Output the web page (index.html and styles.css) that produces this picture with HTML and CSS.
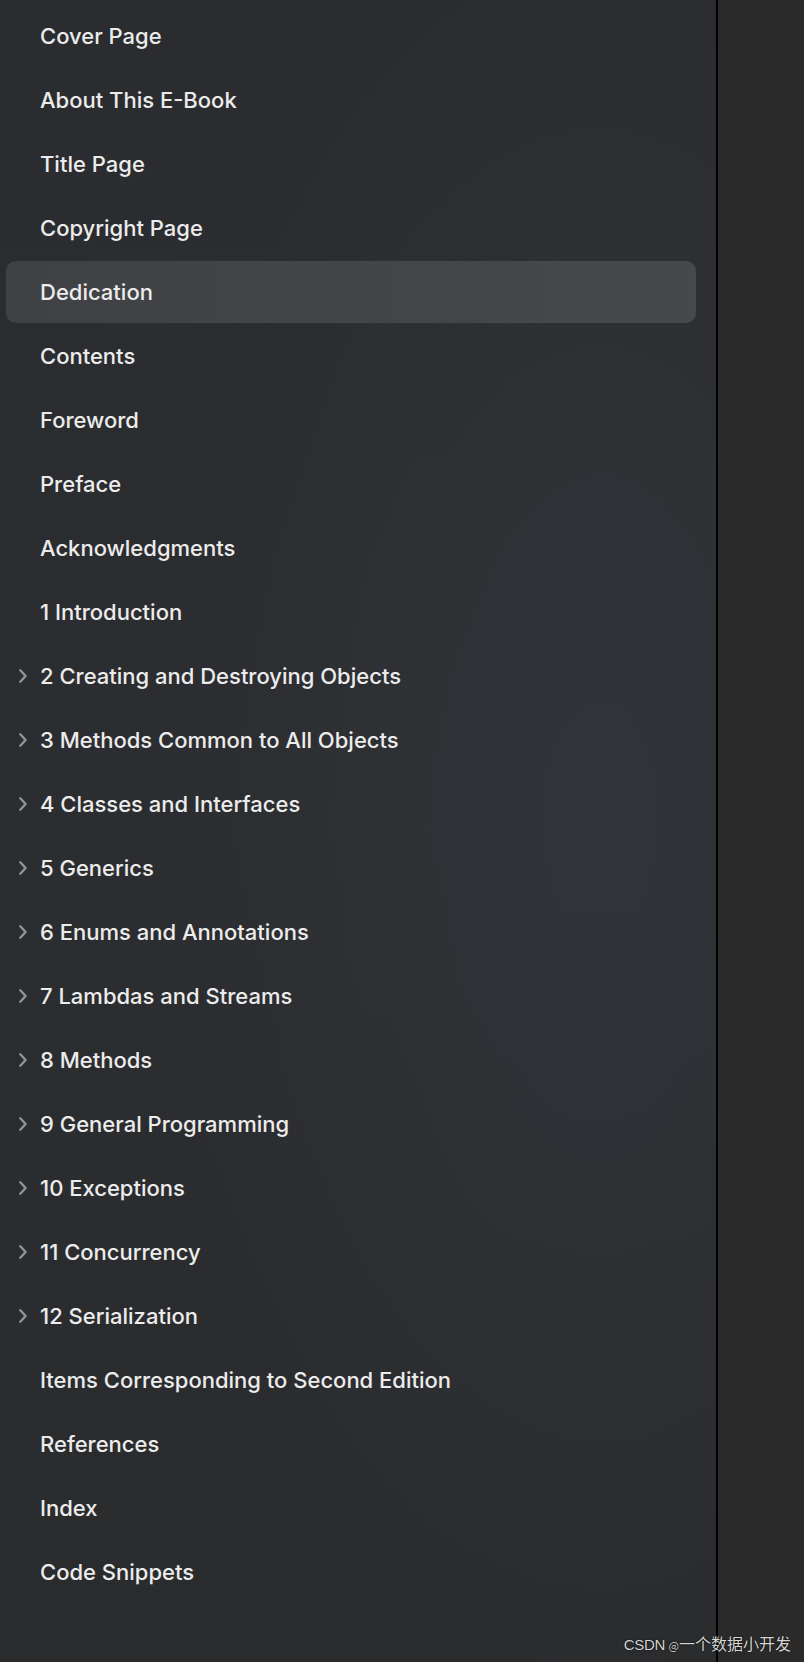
FILE: index.html
```html
<!DOCTYPE html>
<html lang="en">
<head>
<meta charset="utf-8">
<title>Contents</title>
<link rel="stylesheet" href="styles.css">
</head>
<body>
<div class="app">
  <nav class="sidebar">
    <ul class="toc">
      <li class="row"><span class="label">Cover Page</span></li>
      <li class="row"><span class="label">About This E-Book</span></li>
      <li class="row"><span class="label">Title Page</span></li>
      <li class="row"><span class="label">Copyright Page</span></li>
      <li class="row selected"><span class="label">Dedication</span></li>
      <li class="row"><span class="label">Contents</span></li>
      <li class="row"><span class="label">Foreword</span></li>
      <li class="row"><span class="label">Preface</span></li>
      <li class="row"><span class="label">Acknowledgments</span></li>
      <li class="row"><span class="label">1 Introduction</span></li>
      <li class="row has-children"><svg class="chev" viewBox="0 0 8 14"><path d="M1.3 1.3 L6.6 7 L1.3 12.7"/></svg><span class="label">2 Creating and Destroying Objects</span></li>
      <li class="row has-children"><svg class="chev" viewBox="0 0 8 14"><path d="M1.3 1.3 L6.6 7 L1.3 12.7"/></svg><span class="label">3 Methods Common to All Objects</span></li>
      <li class="row has-children"><svg class="chev" viewBox="0 0 8 14"><path d="M1.3 1.3 L6.6 7 L1.3 12.7"/></svg><span class="label">4 Classes and Interfaces</span></li>
      <li class="row has-children"><svg class="chev" viewBox="0 0 8 14"><path d="M1.3 1.3 L6.6 7 L1.3 12.7"/></svg><span class="label">5 Generics</span></li>
      <li class="row has-children"><svg class="chev" viewBox="0 0 8 14"><path d="M1.3 1.3 L6.6 7 L1.3 12.7"/></svg><span class="label">6 Enums and Annotations</span></li>
      <li class="row has-children"><svg class="chev" viewBox="0 0 8 14"><path d="M1.3 1.3 L6.6 7 L1.3 12.7"/></svg><span class="label">7 Lambdas and Streams</span></li>
      <li class="row has-children"><svg class="chev" viewBox="0 0 8 14"><path d="M1.3 1.3 L6.6 7 L1.3 12.7"/></svg><span class="label">8 Methods</span></li>
      <li class="row has-children"><svg class="chev" viewBox="0 0 8 14"><path d="M1.3 1.3 L6.6 7 L1.3 12.7"/></svg><span class="label">9 General Programming</span></li>
      <li class="row has-children"><svg class="chev" viewBox="0 0 8 14"><path d="M1.3 1.3 L6.6 7 L1.3 12.7"/></svg><span class="label">10 Exceptions</span></li>
      <li class="row has-children"><svg class="chev" viewBox="0 0 8 14"><path d="M1.3 1.3 L6.6 7 L1.3 12.7"/></svg><span class="label">11 Concurrency</span></li>
      <li class="row has-children"><svg class="chev" viewBox="0 0 8 14"><path d="M1.3 1.3 L6.6 7 L1.3 12.7"/></svg><span class="label">12 Serialization</span></li>
      <li class="row"><span class="label">Items Corresponding to Second Edition</span></li>
      <li class="row"><span class="label">References</span></li>
      <li class="row"><span class="label">Index</span></li>
      <li class="row"><span class="label">Code Snippets</span></li>
    </ul>
  </nav>
  <div class="divider"></div>
  <main class="content"></main>
</div>
<div class="watermark"><span class="wm-latin">CSDN</span> <span class="wm-at">@</span>一个数据小开发</div>
</body>
</html>
```
FILE: styles.css
```css
html, body {
  margin: 0;
  padding: 0;
  height: 100%;
}
body {
  background: #2a2a2a;
  font-family: Inter, "Noto Sans", "Liberation Sans", sans-serif;
  overflow: hidden;
}
.app {
  display: flex;
  height: 1662px;
}
.sidebar {
  width: 716px;
  flex: none;
  background:
    radial-gradient(ellipse 420px 900px at 600px 820px, rgba(52, 58, 64, 0.55), rgba(52, 58, 64, 0) 100%),
    linear-gradient(180deg, #2b2c2f 0%, #2c2d30 50%, #2a2b2d 100%);
}
.toc {
  list-style: none;
  margin: 0;
  padding: 5px 20px 0 6px;
  display: flex;
  flex-direction: column;
  gap: 2px;
}
.row {
  position: relative;
  height: 62px;
  display: flex;
  align-items: center;
  padding-left: 34px;
  border-radius: 10px;
  color: #ececec;
  font-size: 22px;
  font-weight: 500;
}
.row.selected {
  background: linear-gradient(90deg, #404144 0%, #444548 60%, #46484b 100%);
}
.chev {
  position: absolute;
  left: 13px;
  top: 24px;
  width: 8px;
  height: 14px;
  fill: none;
  stroke: #929396;
  stroke-width: 2.4;
  stroke-linecap: round;
  stroke-linejoin: round;
}
.divider {
  width: 2px;
  flex: none;
  background: #000;
}
.content {
  flex: 1;
  background: #2a2a2a;
}
.watermark {
  position: absolute;
  right: 13px;
  bottom: 7px;
  font-family: "Noto Sans CJK SC", "Noto Sans", sans-serif;
  font-size: 16px;
  color: #d6d6d6;
  text-shadow: 0 0 1px #000, 0 0 1px #000;
  white-space: nowrap;
}
.wm-latin {
  font-family: "Liberation Sans", sans-serif;
  font-size: 15px;
  letter-spacing: -0.3px;
}
.wm-at {
  font-size: 11px;
}
```
